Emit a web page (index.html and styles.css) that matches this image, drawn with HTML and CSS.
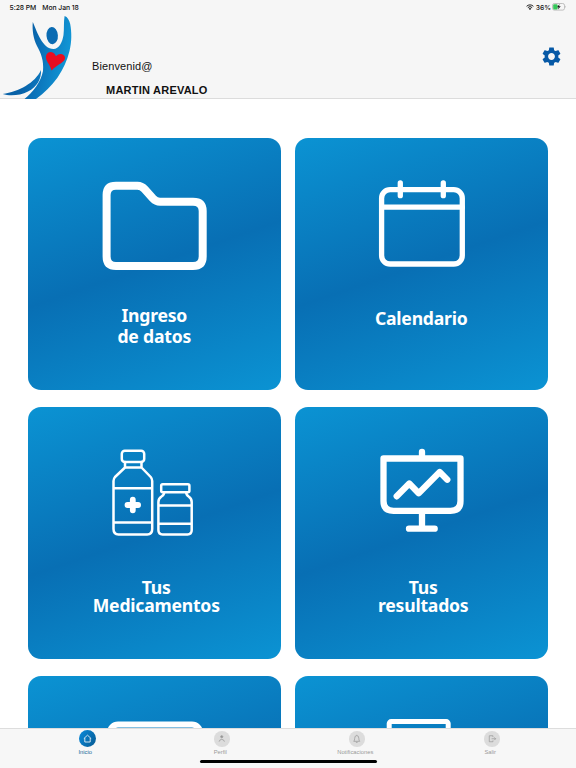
FILE: index.html
```
<!DOCTYPE html>
<html lang="es">
<head>
    <meta charset="UTF-8">
    <meta name="viewport" content="width=device-width, initial-scale=1.0">
    <title>Inicio</title>
    <link rel="stylesheet" href="styles.css">
</head>
<body>
    <header class="header">
        <div class="status-bar">
            <span class="time">5:28 PM</span>
            <span class="date">Mon Jan 18</span>
            <svg class="wifi" viewBox="0 0 16 12">
                <path d="M1.2 4.6a9.6 9.6 0 0 1 13.6 0M3.7 7.2a6.1 6.1 0 0 1 8.6 0" fill="none" stroke="#222" stroke-width="2"/>
                <path d="M8 12L5.3 9.3a3.8 3.8 0 0 1 5.4 0z" fill="#222"/>
            </svg>
            <span class="percent">36%</span>
            <svg class="battery" viewBox="0 0 15 8">
                <rect x=".5" y=".5" width="12" height="6.6" rx="1.8" fill="none" stroke="#a9a9a9" stroke-width=".7"/>
                <rect x="1.2" y="1.2" width="4.4" height="5.2" rx="1" fill="#34c759"/>
                <path d="M7.6 1L5 4.3h1.6L6 6.6l2.7-3.3H7z" fill="#111"/>
                <path d="M13.4 2.8v2c.7-.2.7-1.8 0-2z" fill="#a9a9a9"/>
            </svg>
        </div>
        <div class="welcome">
            <svg class="logo" viewBox="0 11 80 88">
                <defs>
                    <linearGradient id="logo-blue" gradientUnits="userSpaceOnUse" x1="28" y1="50" x2="72" y2="58">
                        <stop offset="0" stop-color="#0862a8"/>
                        <stop offset=".3" stop-color="#0b72b9"/>
                        <stop offset="1" stop-color="#129bd9"/>
                    </linearGradient>
                </defs>
                <path d="M32.800 22C35 27 38 35 40.500 39C44 45 48 49 53.500 49C59 49 62.500 42 63.500 35C64.300 29 63.500 22 64.600 16C67.500 17 69.300 20 70.200 24C71.700 32 71.900 42 69.500 51C65 70 53 87 36 99H24.500C33 92 41 82 43 71C44 61 41 53 37 46C33.500 39 32 30 32.800 22z" fill="url(#logo-blue)"/>
                <path d="M2.700 94C19 91.500 35 83 41 70C41.500 79 37 87 28 91.500C20 95.500 10 96.500 2.700 94z" fill="url(#logo-blue)"/>
                <ellipse cx="52.200" cy="35.600" rx="5.700" ry="8.600" fill="#0a6bb2" transform="rotate(-4 52 35.600)"/>
                <path d="M51.500 70.500C50 64 45.200 61 46 56C47.200 51 53.500 50.500 56 56.300C59 52.500 64.500 53.500 65 57.500C65.500 62.500 57.500 64 51.500 70.500z" fill="#e80d20"/>
            </svg>
            <div class="user">
                <span class="greeting">Bienvenid@</span>
                <strong class="name">MARTIN AREVALO</strong>
            </div>
            <svg class="settings" viewBox="2 2 20 20">
                <path fill="#0759a6" d="M19.140 12.940c.04-.3.060-.61.060-.94 0-.32-.02-.64-.07-.94l2.030-1.580c.18-.14.230-.41.120-.61l-1.920-3.320c-.12-.22-.37-.29-.59-.22l-2.390.96c-.5-.38-1.030-.7-1.620-.94l-.36-2.540c-.04-.24-.24-.41-.48-.41h-3.840c-.24 0-.43.170-.47.410l-.36 2.540c-.59.240-1.130.570-1.620.940l-2.390-.96c-.22-.08-.47 0-.59.220L2.740 8.870c-.12.210-.08.470.120.610l2.030 1.580c-.05.300-.09.630-.09.940s.02.640.070.940l-2.030 1.580c-.18.140-.23.410-.12.610l1.920 3.320c.12.220.370.290.590.220l2.390-.96c.5.380 1.030.700 1.620.940l.36 2.540c.05.240.24.410.48.410h3.840c.24 0 .44-.17.470-.41l.36-2.540c.59-.24 1.130-.56 1.620-.94l2.390.96c.22.080.47 0 .59-.22l1.920-3.320c.12-.22.070-.47-.12-.61l-2.010-1.580zM12 15.600c-1.980 0-3.600-1.620-3.600-3.600s1.620-3.600 3.600-3.600 3.600 1.620 3.600 3.600-1.620 3.600-3.600 3.600z"/>
            </svg>
        </div>
    </header>

    <main class="menu">
        <a class="card">
            <svg class="card-icon" viewBox="0 0 252 150" stroke-width="8">
                <path d="M88 47.700H109.500Q113.500 47.700 116.500 51L125 60.500Q128 63.700 132 63.700H165Q174.700 63.700 174.700 73V118.500Q174.700 128 165 128H88Q78.600 128 78.600 118.500V57Q78.600 47.700 88 47.700z"/>
            </svg>
            <span class="label label-wide">Ingreso<br>de datos</span>
        </a>
        <a class="card">
            <svg class="card-icon" viewBox="0 0 252 150" stroke-width="5.300">
                <rect x="86.600" y="51.700" width="80.700" height="74.300" rx="8.500"/>
                <path d="M86.600 69.200H167.300M105.300 45V57.700M148.300 45V57.700"/>
            </svg>
            <span class="label label-single">Calendario</span>
        </a>
        <a class="card">
            <svg class="card-icon" viewBox="0 0 252 150" stroke-width="2.500">
                <rect x="93.800" y="43.700" width="22.400" height="11.300" rx="3"/>
                <path d="M97 55V60.500H113.500V55M97 60.500L87 70Q85.500 71.700 85.500 74V122Q85.500 127.400 90.500 127.400H119.200Q124.200 127.400 124.200 122V74Q124.200 71.700 122.700 70L113.500 60.500M85.500 81.200H124.200M85.500 115.400H124.200"/>
                <path d="M104.800 92.700V103.300M99.500 98H110.100" stroke-width="5.800"/>
                <rect x="133.200" y="77.300" width="28.200" height="8" rx="1.500"/>
                <path d="M136.200 85.300Q136.200 88 133.500 89.500Q130.400 91.500 130.400 95V123Q130.400 127.400 134.600 127.400H159.500Q163.700 127.400 163.700 123V95Q163.700 91.500 160.600 89.500Q158.200 88 158.200 85.300M130.400 98.400H163.700M130.400 116.700H163.700"/>
            </svg>
            <span class="label label-tight">Tus<br>Medicamentos</span>
        </a>
        <a class="card">
            <svg class="card-icon" viewBox="0 0 252 150" stroke-width="6.300">
                <path d="M88.500 51.500H165.500V94Q165.500 103.800 155.500 103.800H98.500Q88.500 103.800 88.500 94zM127 45V51M127 104V121.700M114 121.700H139.700M101.700 89.300L114.300 76.500L123.700 86.200L144.700 65L152.300 72.700"/>
            </svg>
            <span class="label label-tight">Tus<br>resultados</span>
        </a>
        <a class="card">
            <svg class="card-icon" viewBox="0 0 252 150" stroke-width="6">
                <rect x="82" y="48.500" width="90" height="80" rx="8"/>
            </svg>
        </a>
        <a class="card">
            <svg class="card-icon" viewBox="0 0 252 150" stroke-width="5">
                <rect x="94.200" y="45.600" width="59" height="84" rx="2"/>
            </svg>
        </a>
    </main>

    <nav class="tab-bar">
        <a class="tab active">
            <svg class="tab-icon" viewBox="0 0 17 17">
                <path d="M4.800 8.600L8.500 5.200L12.200 8.600M5.800 8V12H11.200V8"/>
            </svg>
            <span>Inicio</span>
        </a>
        <a class="tab">
            <svg class="tab-icon" viewBox="0 0 17 17">
                <circle cx="8.500" cy="6.300" r="1.200" fill="#999"/>
                <path d="M5.600 11.700Q6 9.200 8.500 9.200T11.400 11.700"/>
            </svg>
            <span>Perfil</span>
        </a>
        <a class="tab">
            <svg class="tab-icon" viewBox="0 0 17 17">
                <path d="M5.200 11.300H11.800Q10.800 10.300 10.800 8.300Q10.800 5 8.500 5T6.200 8.300Q6.200 10.300 5.200 11.300zM8.500 4.200V5M7.600 12.500H9.400"/>
            </svg>
            <span>Notificaciones</span>
        </a>
        <a class="tab">
            <svg class="tab-icon" viewBox="0 0 17 17">
                <path d="M9.800 6.600V5.200H5.800V11.800H9.800V10.400M8.300 8.500H12.800M11.300 7L12.800 8.500L11.300 10"/>
            </svg>
            <span>Salir</span>
        </a>
        <div class="home-indicator"></div>
    </nav>
</body>
</html>
```
FILE: styles.css
```
* { box-sizing: border-box; }
body {
    display: flex;
    flex-direction: column;
    height: 768px;
    margin: 0;
    overflow: hidden;
    font-family: 'Liberation Sans', Arial, sans-serif;
    background: #ffffff;
    color: #111111;
}

.header {
    flex: none;
    height: 99px;
    background: #f6f6f6;
    border-bottom: 1px solid #dcdcdc;
}
.status-bar {
    display: flex;
    align-items: center;
    height: 14px;
    padding: 0 9px 0 9.5px;
    font-family: Inter, sans-serif;
    font-size: 6.8px;
    font-weight: 500;
    letter-spacing: -0.05px;
}
.date { margin-left: 6px; }
.wifi { width: 8px; height: 6px; margin-left: auto; }
.percent { margin-left: 2px; }
.battery { width: 15px; height: 8px; margin-left: 1px; }

.welcome { display: flex; height: 84px; }
.logo { width: 80px; height: 88px; margin-top: -3px; }
.user {
    display: flex;
    flex-direction: column;
    padding: 46px 0 0 12px;
    line-height: 12px;
}
.greeting { font-size: 11px; letter-spacing: 0.1px; }
.name { margin: 12px 0 0 14px; font-size: 11px; letter-spacing: 0.23px; }
.settings { width: 19px; height: 19px; margin: 33px 15px 0 auto; }

.menu {
    flex: 1;
    min-height: 0;
    display: grid;
    grid-template-columns: 252.5px 252.5px;
    grid-auto-rows: 251.5px;
    gap: 17.5px 14.5px;
    padding: 39px 28px 0;
    overflow: hidden;
}
.card {
    border-radius: 13px;
    background: linear-gradient(161deg, #0b93d3 0%, #086fb4 50%, #0b93d3 100%);
    color: #ffffff;
    text-align: center;
}
.card-icon {
    display: block;
    width: 252px;
    height: 150px;
    fill: none;
    stroke: #ffffff;
    stroke-linecap: round;
    stroke-linejoin: round;
}
.label {
    display: block;
    font-family: 'Noto Sans', 'Open Sans', sans-serif;
    font-size: 17.6px;
    font-weight: bold;
    letter-spacing: -0.22px;
}
.label-wide { padding-top: 17px; line-height: 21px; }
.label-single { padding-top: 19px; line-height: 22px; }
.label-tight { padding: 21px 0 0 4px; line-height: 18.3px; }

.tab-bar {
    position: relative;
    flex: none;
    display: flex;
    height: 40px;
    padding: 1px 18px 0;
    background: #f7f7f7;
    border-top: 1px solid #dddddd;
}
.tab {
    flex: 1;
    display: flex;
    flex-direction: column;
    align-items: center;
    color: #999999;
    font-size: 5.8px;
    line-height: 7px;
}
.tab span { margin-right: 0.5px; }
.tab-icon {
    width: 15.5px;
    height: 15.5px;
    margin: 1px 0 2px 3px;
    border-radius: 50%;
    background: #dcdcdc;
    fill: none;
    stroke: #999999;
    stroke-width: 0.8;
}
.active { color: #1b6797; }
.active .tab-icon {
    width: 17px;
    height: 17px;
    margin: 0 0 1.5px 3px;
    background: linear-gradient(120deg, #0b8bdc, #075a92);
    stroke: #ffffff;
}
.home-indicator {
    position: absolute;
    bottom: 5px;
    left: 200px;
    width: 177px;
    height: 3px;
    border-radius: 2px;
    background: #000000;
}
```
